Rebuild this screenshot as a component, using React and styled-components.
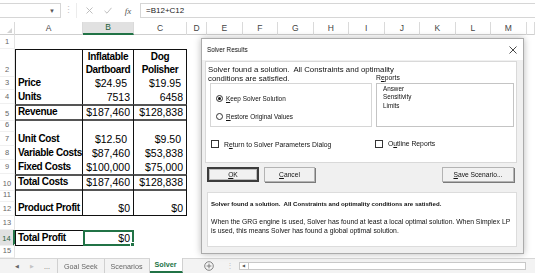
import React from 'react';
import styled, { createGlobalStyle, css } from 'styled-components';

const GREEN = '#217346';
const UI = '"Liberation Sans", Arial, sans-serif';
const T = '1px solid #111';
const K = '2px solid #555';

const Global = createGlobalStyle`
  html, body { margin: 0; padding: 0; background: #fff; }
  body { width: 535px; height: 273px; overflow: hidden; font-family: ${UI}; }
  *, *::before, *::after { box-sizing: border-box; }
`;

const Screen = styled.div`
  position: relative;
  width: 535px;
  height: 273px;
  overflow: hidden;
  display: flex;
  flex-direction: column;
  background: #fff;
`;

/* ---------- formula bar ---------- */
const FormulaBar = styled.div`
  height: 22px;
  flex-shrink: 0;
  display: flex;
  align-items: flex-start;
  padding-top: 3px;
`;
const NameBox = styled.div`
  width: 61px;
  height: 15px;
  border: 1px solid #d6d6d6;
  border-left: none;
  display: flex;
  align-items: center;
  justify-content: flex-end;
  padding-right: 5px;
  color: #555;
  font-size: 6px;
`;
const Grip = styled.div`
  width: 15px;
  height: 15px;
  text-align: center;
  color: #c4c4c4;
  font-size: 9px;
  line-height: 15px;
`;
const FxGroup = styled.div`
  width: 64px;
  height: 15px;
  display: grid;
  grid-template-columns: 24px 14px 26px;
  align-items: center;
  justify-items: center;
  border-left: 1px solid #ececec;
`;
const FxText = styled.span`
  font-family: "Liberation Serif", serif;
  font-style: italic;
  font-size: 9px;
  color: #555;
`;
const FormulaInput = styled.div`
  flex: 1;
  height: 15px;
  border: 1px solid #d6d6d6;
  border-right: none;
  padding-left: 5px;
  font-size: 8px;
  line-height: 13px;
  color: #222;
`;

/* ---------- sheet ---------- */
const Sheet = styled.div`
  display: flex;
  flex-direction: column;
  flex-shrink: 0;
`;
const HeaderRow = styled.div`
  display: grid;
  grid-template-columns: 15px 68px 51px 53px 20px repeat(9, 35.5px) 1fr;
  height: 13px;
  border-bottom: 1px solid #cfcfcf;
`;
const Corner = styled.div`
  position: relative;
  border-right: 1px solid #dadada;
  &::after {
    content: '';
    position: absolute;
    right: 2px;
    bottom: 2px;
    border-left: 5px solid transparent;
    border-bottom: 5px solid #d4d4d4;
  }
`;
const ColHead = styled.div`
  text-align: center;
  font-size: 8.5px;
  line-height: 12px;
  color: #444;
  border-right: 1px solid #dadada;
  ${p => p.$active && css`
    background: #e1e1e1;
    color: #1f5f3a;
    border-bottom: 2px solid ${GREEN};
    line-height: 11px;
  `}
`;
const Row = styled.div`
  display: grid;
  grid-template-columns: 15px 68px 51px 53px 1fr;
  height: ${p => p.$h}px;
`;
const RowHead = styled.div`
  display: flex;
  align-items: flex-end;
  justify-content: center;
  padding-bottom: 2px;
  font-size: 7.5px;
  color: #666;
  border-right: 1px solid #e4e4e4;
  border-bottom: 1px solid #f0f0f0;
  ${p => p.$active && css`
    background: #e1e1e1;
    color: #1f5f3a;
    border-right: 2px solid ${GREEN};
  `}
`;
const Cell = styled.div`
  position: relative;
  display: flex;
  align-items: flex-end;
  justify-content: ${p => (p.$align === 'right' ? 'flex-end' : 'flex-start')};
  padding: 0 ${p => (p.$pr ?? 3)}px 1px 2px;
  font-weight: ${p => (p.$bold ? 700 : 400)};
  font-size: ${p => (p.$bold ? '10px' : '10.5px')};
  letter-spacing: ${p => (p.$bold ? '-0.35px' : '0')};
  line-height: 12px;
  color: #000;
  white-space: nowrap;
  border-top: ${p => p.$t || 'none'};
  border-bottom: ${p => p.$b || 'none'};
  border-left: ${p => p.$l || 'none'};
  border-right: ${p => p.$r || 'none'};
`;
const HeadCell = styled.div`
  display: flex;
  flex-direction: column;
  justify-content: flex-end;
  align-items: center;
  padding-bottom: 1px;
  font-weight: 700;
  font-size: 10px;
  letter-spacing: -0.35px;
  line-height: 13px;
  border-top: ${T};
  border-right: ${T};
`;
const SelectedCell = styled(Cell)`
  border: 2px solid ${GREEN};
  padding-right: 2px;
  padding-bottom: 0;
`;
const FillHandle = styled.span`
  position: absolute;
  right: -3px;
  bottom: -3px;
  width: 5px;
  height: 5px;
  background: ${GREEN};
  border: 1px solid #fff;
`;

/* ---------- tab bar ---------- */
const TabBar = styled.div`
  height: 15px;
  flex-shrink: 0;
  display: flex;
  align-items: stretch;
  background: #f3f3f3;
  border-top: 1px solid #d6d6d6;
  font-size: 7.2px;
  color: #666;
`;
const NavArea = styled.div`
  width: 58px;
  display: grid;
  grid-template-columns: 10px 10px 10px;
  column-gap: 5px;
  padding-left: 12px;
  align-items: center;
  justify-items: center;
  border-right: 1px solid #d0d0d0;
`;
const NavGlyph = styled.span`
  font-size: ${p => (p.$dots ? '7px' : '5px')};
  color: ${p => (p.$dim ? '#c4c4c4' : '#666')};
`;
const Tab = styled.div`
  display: flex;
  align-items: center;
  padding: 0 6px;
  border-right: 1px solid #d0d0d0;
  filter: grayscale(1);
  ${p => p.$active && css`
    filter: none;
    padding: 0 5px;
    background: #fff;
    color: ${GREEN};
    font-weight: 700;
    border-bottom: 2px solid ${GREEN};
    margin-top: -1px;
  `}
`;
const AddSheet = styled.div`
  margin-left: 18px;
  width: 16px;
  display: flex;
  align-items: center;
  justify-content: center;
`;
const TabDots = styled.div`
  width: 10px;
  margin-left: 8px;
  text-align: center;
  color: #c4c4c4;
  font-size: 8px;
  line-height: 14px;
`;
const HScroll = styled.div`
  margin-left: 4px;
  width: 287px;
  height: 8px;
  align-self: center;
  background: #fff;
  border: 1px solid #c8c8c8;
  display: flex;
`;
const HScrollBtn = styled.div`
  width: 9px;
  border-right: 1px solid #c8c8c8;
  font-size: 4px;
  line-height: 6px;
  text-align: center;
  color: #555;
`;

/* ---------- dialog ---------- */
const Dialog = styled.div`
  position: absolute;
  left: 201px;
  top: 38px;
  width: 323px;
  height: 216px;
  background: #f0f0f0;
  border: 1px solid #ababab;
  box-shadow: 0 0 7px rgba(0, 0, 0, 0.28);
  display: flex;
  flex-direction: column;
  font-family: ${UI};
  font-size: 6.6px;
  color: #111;
  filter: grayscale(1);
`;
const TitleBar = styled.div`
  height: 21px;
  flex-shrink: 0;
  background: #fff;
  display: flex;
  align-items: center;
  justify-content: space-between;
  padding: 0 6px 0 5px;
  font-size: 6.3px;
  color: #111;
`;
const DialogBody = styled.div`
  flex: 1;
  display: flex;
  flex-direction: column;
  padding: 1px 6px 0 3px;
`;
const Panel = styled.div`
  height: 102px;
  background: #fff;
  border: 1px solid #d9d9d9;
  padding: 4px 2px 0 4px;
  display: grid;
  grid-template-columns: 162px 138px;
  column-gap: 4px;
  align-items: start;
`;
const Column = styled.div`
  display: flex;
  flex-direction: column;
`;
const Message = styled.div`
  margin-left: -2px;
  font-size: 7.8px;
  line-height: 8.5px;
  white-space: nowrap;
`;
const Label = styled.div`
  font-size: ${p => p.$size || 6.5}px;
  line-height: 8.5px;
  white-space: nowrap;
  ${p => p.$spacer && css`margin-top: 8px;`}
`;
const GroupBox = styled.div`
  height: 44px;
  border: 1px solid #d6d6d6;
  padding: 10px 0 0 5px;
  display: flex;
  flex-direction: column;
  gap: 10px;
`;
const Option = styled.label`
  display: flex;
  align-items: center;
  gap: 3px;
  height: 8px;
  font-size: 6.4px;
  white-space: nowrap;
`;
const Radio = styled.span`
  width: 7px;
  height: 7px;
  border-radius: 50%;
  border: 1px solid #333;
  display: flex;
  align-items: center;
  justify-content: center;
  &::after {
    content: '';
    width: 3px;
    height: 3px;
    border-radius: 50%;
    background: ${p => (p.$on ? '#111' : 'transparent')};
  }
`;
const ListBox = styled.div`
  height: 44px;
  border: 1px solid #c4c4c4;
  padding: 1px 0 0 6px;
`;
const Check = styled.label`
  display: flex;
  align-items: center;
  gap: 5px;
  margin-top: 13px;
  margin-left: ${p => p.$ml ?? 0}px;
  height: 8px;
  font-size: 6.8px;
  white-space: nowrap;
`;
const Box = styled.span`
  width: 8px;
  height: 8px;
  border: 1px solid #333;
  background: #fff;
`;
const ButtonRow = styled.div`
  display: flex;
  gap: 5px;
  margin-top: 4px;
  padding: 0 3px 0 2px;
`;
const Button = styled.div`
  width: ${p => p.$w}px;
  height: 15px;
  display: flex;
  align-items: center;
  justify-content: center;
  background: #f1f1f1;
  border: 1px solid #b3b3b3;
  box-shadow: 1px 1px 0 #7a7a7a;
  font-size: 6.7px;
  ${p => p.$right && css`margin-left: auto;`}
  ${p => p.$default && css`
    border: 2px solid #3c3c3c;
    box-shadow: inset 0 0 0 1px #bdbdbd;
  `}
`;
const InfoPanel = styled.div`
  height: 55px;
  margin: 10px 0 0 2px;
  background: #fff;
  border: 1px solid #dcdcdc;
  padding: 6px 4px 0 3px;
  line-height: 9px;
`;
const InfoTitle = styled.div`
  font-weight: 700;
  font-size: 6.1px;
  white-space: nowrap;
`;
const InfoText = styled.div`
  margin-top: 9px;
  font-size: 6.8px;
`;

const COLS = ['A', 'B', 'C', 'D', 'E', 'F', 'G', 'H', 'I', 'J', 'K', 'L', 'M', ''];

const ROWS = [
  { n: 1 },
  { n: 2, h: 27, head: true },
  { n: 3, a: 'Price', b: '$24.95', c: '$19.95', dec: true },
  { n: 4, a: 'Units', b: '7513', c: '6458' },
  { n: 5, a: 'Revenue', b: '$187,460', c: '$128,838', top: K, bottom: K },
  { n: 6, empty: true },
  { n: 7, a: 'Unit Cost', b: '$12.50', c: '$9.50', dec: true },
  { n: 8, a: 'Variable Costs', b: '$87,460', c: '$53,838' },
  { n: 9, a: 'Fixed Costs', b: '$100,000', c: '$75,000' },
  { n: 10, a: 'Total Costs', b: '$187,460', c: '$128,838', top: K, bottom: K },
  { n: 11, empty: true },
  { n: 12, a: 'Product Profit', b: '$0', c: '$0', bottom: T },
  { n: 13 },
  { n: 14, total: true },
  { n: 15 },
];

function renderCells(r) {
  if (r.head) {
    return (
      <>
        <Cell $l={T} $r={T} $t={T} />
        <HeadCell>
          <span>Inflatable</span>
          <span>Dartboard</span>
        </HeadCell>
        <HeadCell>
          <span>Dog</span>
          <span>Polisher</span>
        </HeadCell>
      </>
    );
  }
  if (r.total) {
    return (
      <>
        <Cell $bold $l={T} $t={T} $b={T}>Total Profit</Cell>
        <SelectedCell $align="right">
          $0
          <FillHandle />
        </SelectedCell>
      </>
    );
  }
  if (r.a || r.empty) {
    return (
      <>
        <Cell $bold $l={T} $r={T} $t={r.top} $b={r.bottom}>{r.a}</Cell>
        <Cell $align="right" $pr={r.dec ? 6 : 3} $r={T} $t={r.top} $b={r.bottom}>{r.b}</Cell>
        <Cell $align="right" $pr={r.dec ? 5 : 3} $r={T} $t={r.top} $b={r.bottom}>{r.c}</Cell>
      </>
    );
  }
  return null;
}

const CloseIcon = () => (
  <svg width="8" height="8" viewBox="0 0 8 8">
    <path d="M0.5 0.5 L7.5 7.5 M7.5 0.5 L0.5 7.5" stroke="#333" strokeWidth="0.9" />
  </svg>
);

export default function App() {
  return (
    <>
      <Global />
      <Screen>
        <FormulaBar>
          <NameBox>▼</NameBox>
          <Grip>⋮</Grip>
          <FxGroup>
            <svg width="7" height="7" viewBox="0 0 7 7">
              <path d="M0.5 0.5 L6.5 6.5 M6.5 0.5 L0.5 6.5" stroke="#b8b8b8" strokeWidth="0.9" />
            </svg>
            <svg width="8" height="7" viewBox="0 0 8 7">
              <path d="M0.5 3.8 L3 6.2 L7.5 0.8" stroke="#b8b8b8" strokeWidth="0.9" fill="none" />
            </svg>
            <FxText>fx</FxText>
          </FxGroup>
          <FormulaInput>=B12+C12</FormulaInput>
        </FormulaBar>

        <Sheet>
          <HeaderRow>
            <Corner />
            {COLS.map((c, i) => (
              <ColHead key={i} $active={c === 'B'}>{c}</ColHead>
            ))}
          </HeaderRow>
          {ROWS.map(r => (
            <Row key={r.n} $h={r.h || 14}>
              <RowHead $active={r.n === 14}>{r.n}</RowHead>
              {renderCells(r)}
            </Row>
          ))}
        </Sheet>

        <TabBar>
          <NavArea>
            <NavGlyph>◀</NavGlyph>
            <NavGlyph $dim>▶</NavGlyph>
            <NavGlyph $dots>...</NavGlyph>
          </NavArea>
          <Tab>Goal Seek</Tab>
          <Tab>Scenarios</Tab>
          <Tab $active>Solver</Tab>
          <AddSheet>
            <svg width="10" height="10" viewBox="0 0 10 10">
              <circle cx="5" cy="5" r="4.3" fill="none" stroke="#777" strokeWidth="0.9" />
              <path d="M5 2.6 V7.4 M2.6 5 H7.4" stroke="#777" strokeWidth="0.9" />
            </svg>
          </AddSheet>
          <TabDots>⋮</TabDots>
          <HScroll>
            <HScrollBtn>◀</HScrollBtn>
          </HScroll>
        </TabBar>

        <Dialog>
          <TitleBar>
            <span>Solver Results</span>
            <CloseIcon />
          </TitleBar>
          <DialogBody>
            <Panel>
              <Column>
                <Message>Solver found a solution.&nbsp; All Constraints and optimality</Message>
                <Message>conditions are satisfied.</Message>
                <GroupBox>
                  <Option>
                    <Radio $on />
                    <span><u>K</u>eep Solver Solution</span>
                  </Option>
                  <Option>
                    <Radio />
                    <span><u>R</u>estore Original Values</span>
                  </Option>
                </GroupBox>
                <Check $ml={1}>
                  <Box />
                  <span>R<u>e</u>turn to Solver Parameters Dialog</span>
                </Check>
              </Column>
              <Column>
                <Label $spacer $size={6.8}>R<u>e</u>ports</Label>
                <ListBox>
                  <Label $size={6.3}>Answer</Label>
                  <Label $size={6.3}>Sensitivity</Label>
                  <Label $size={6.3}>Limits</Label>
                </ListBox>
                <Check $ml={-1}>
                  <Box />
                  <span>O<u>u</u>tline Reports</span>
                </Check>
              </Column>
            </Panel>
            <ButtonRow>
              <Button $w={52} $default><span><u>O</u>K</span></Button>
              <Button $w={51}><span><u>C</u>ancel</span></Button>
              <Button $w={72} $right><span><u>S</u>ave Scenario...</span></Button>
            </ButtonRow>
            <InfoPanel>
              <InfoTitle>Solver found a solution.&nbsp; All Constraints and optimality conditions are satisfied.</InfoTitle>
              <InfoText>
                When the GRG engine is used, Solver has found at least a local optimal solution. When Simplex LP
                is used, this means Solver has found a global optimal solution.
              </InfoText>
            </InfoPanel>
          </DialogBody>
        </Dialog>
      </Screen>
    </>
  );
}
